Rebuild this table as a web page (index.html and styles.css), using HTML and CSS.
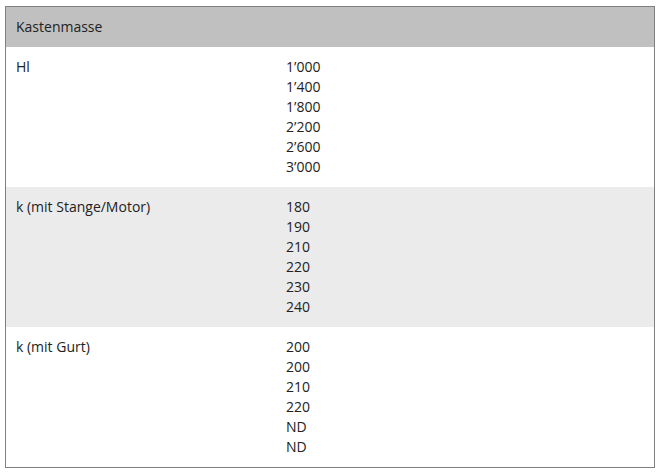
FILE: index.html
```html
<!DOCTYPE html>
<html>
<head>
<meta charset="utf-8">
<link rel="stylesheet" href="styles.css">
</head>
<body>
<table class="spec">
  <thead>
    <tr><th colspan="2">Kastenmasse</th></tr>
  </thead>
  <tbody>
    <tr>
      <td class="label">Hl</td>
      <td class="values">1’000<br>1’400<br>1’800<br>2’200<br>2’600<br>3’000</td>
    </tr>
    <tr class="alt">
      <td class="label">k (mit Stange/Motor)</td>
      <td class="values">180<br>190<br>210<br>220<br>230<br>240</td>
    </tr>
    <tr>
      <td class="label">k (mit Gurt)</td>
      <td class="values">200<br>200<br>210<br>220<br>ND<br>ND</td>
    </tr>
  </tbody>
</table>
</body>
</html>
```
FILE: styles.css
```css
html, body { margin: 0; padding: 0; background: #fff; }
body { padding: 6px 5px; }
.spec {
  width: 650px;
  border-collapse: collapse;
  border: 1px solid #808080;
  font-family: "Open Sans", sans-serif;
  font-size: 14px;
  line-height: 20px;
  color: #222;
}
.spec th {
  background: #c0c0c0;
  text-align: left;
  font-weight: normal;
  padding: 10px 10px;
}
.spec td {
  padding: 10px 10px;
  vertical-align: top;
}
.spec td.label { width: 250px; }
.spec tr.alt td { background: #ebebeb; }
```
